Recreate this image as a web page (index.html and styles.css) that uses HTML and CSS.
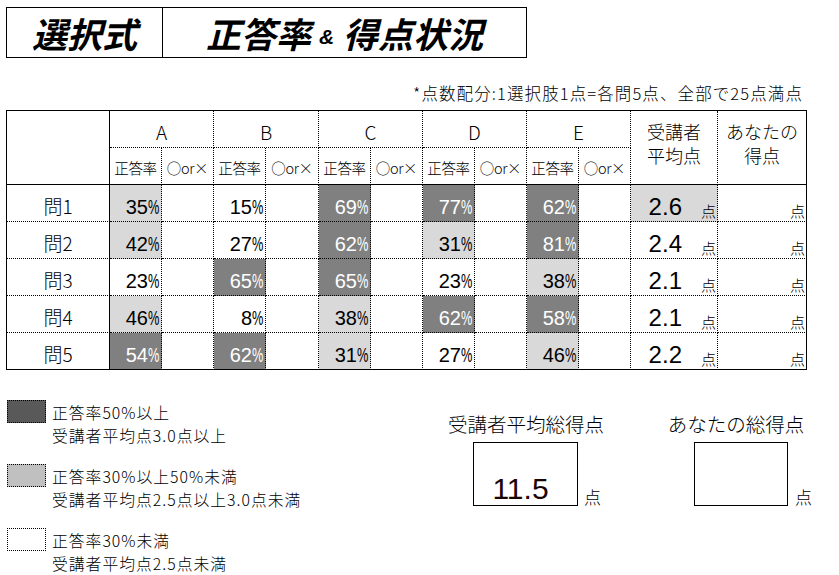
FILE: index.html
```html
<!DOCTYPE html>
<html lang="ja">
<head>
<meta charset="utf-8">
<title>選択式 正答率＆得点状況</title>
<link rel="stylesheet" href="styles.css">
</head>
<body>
<div class="page">
  <div class="title">
    <div class="t1">選択式</div>
    <div class="t2">正答率<span class="amp">&amp;</span>得点状況</div>
  </div>
  <div class="note">*点数配分:1選択肢1点=各問5点、全部で25点満点</div>

  <div class="grid">
    <div class="c corner"></div>
    <div class="c letter">A</div>
    <div class="c letter">B</div>
    <div class="c letter">C</div>
    <div class="c letter">D</div>
    <div class="c letter">E</div>
    <div class="c hdr avgh">受講者<br>平均点</div>
    <div class="c hdr youh last">あなたの<br>得点</div>

    <div class="c sub">正答率</div><div class="c sub">○or×</div>
    <div class="c sub">正答率</div><div class="c sub">○or×</div>
    <div class="c sub">正答率</div><div class="c sub">○or×</div>
    <div class="c sub">正答率</div><div class="c sub">○or×</div>
    <div class="c sub">正答率</div><div class="c sub">○or×</div>

    <div class="c q">問1</div>
    <div class="c pct light">35<span class="pc">%</span></div><div class="c"></div>
    <div class="c pct">15<span class="pc">%</span></div><div class="c"></div>
    <div class="c pct dark">69<span class="pc">%</span></div><div class="c"></div>
    <div class="c pct dark">77<span class="pc">%</span></div><div class="c"></div>
    <div class="c pct dark">62<span class="pc">%</span></div><div class="c"></div>
    <div class="c avg light"><span class="num">2.6</span><span class="sm">点</span></div>
    <div class="c you last"><span class="sm">点</span></div>

    <div class="c q">問2</div>
    <div class="c pct light">42<span class="pc">%</span></div><div class="c"></div>
    <div class="c pct">27<span class="pc">%</span></div><div class="c"></div>
    <div class="c pct dark">62<span class="pc">%</span></div><div class="c"></div>
    <div class="c pct light">31<span class="pc">%</span></div><div class="c"></div>
    <div class="c pct dark">81<span class="pc">%</span></div><div class="c"></div>
    <div class="c avg"><span class="num">2.4</span><span class="sm">点</span></div>
    <div class="c you last"><span class="sm">点</span></div>

    <div class="c q">問3</div>
    <div class="c pct">23<span class="pc">%</span></div><div class="c"></div>
    <div class="c pct dark">65<span class="pc">%</span></div><div class="c"></div>
    <div class="c pct dark">65<span class="pc">%</span></div><div class="c"></div>
    <div class="c pct">23<span class="pc">%</span></div><div class="c"></div>
    <div class="c pct light">38<span class="pc">%</span></div><div class="c"></div>
    <div class="c avg"><span class="num">2.1</span><span class="sm">点</span></div>
    <div class="c you last"><span class="sm">点</span></div>

    <div class="c q">問4</div>
    <div class="c pct light">46<span class="pc">%</span></div><div class="c"></div>
    <div class="c pct">8<span class="pc">%</span></div><div class="c"></div>
    <div class="c pct light">38<span class="pc">%</span></div><div class="c"></div>
    <div class="c pct dark">62<span class="pc">%</span></div><div class="c"></div>
    <div class="c pct dark">58<span class="pc">%</span></div><div class="c"></div>
    <div class="c avg"><span class="num">2.1</span><span class="sm">点</span></div>
    <div class="c you last"><span class="sm">点</span></div>

    <div class="c q bot">問5</div>
    <div class="c pct dark bot">54<span class="pc">%</span></div><div class="c bot"></div>
    <div class="c pct dark bot">62<span class="pc">%</span></div><div class="c bot"></div>
    <div class="c pct light bot">31<span class="pc">%</span></div><div class="c bot"></div>
    <div class="c pct bot">27<span class="pc">%</span></div><div class="c bot"></div>
    <div class="c pct light bot">46<span class="pc">%</span></div><div class="c bot"></div>
    <div class="c avg bot"><span class="num">2.2</span><span class="sm">点</span></div>
    <div class="c you last bot"><span class="sm">点</span></div>
  </div>

  <div class="bottom">
    <div class="legend">
      <div class="li">
        <div class="swatch sw-dark"></div>
        <div class="lt">正答率50%以上<br>受講者平均点3.0点以上</div>
      </div>
      <div class="li">
        <div class="swatch sw-light"></div>
        <div class="lt">正答率30%以上50%未満<br>受講者平均点2.5点以上3.0点未満</div>
      </div>
      <div class="li">
        <div class="swatch"></div>
        <div class="lt">正答率30%未満<br>受講者平均点2.5点未満</div>
      </div>
    </div>

    <div class="score s1">
      <div class="score-title">受講者平均総得点</div>
      <div class="score-row">
        <div class="box box1"><span class="val">11.5</span></div>
        <span class="pt">点</span>
      </div>
    </div>

    <div class="score s2">
      <div class="score-title">あなたの総得点</div>
      <div class="score-row">
        <div class="box box2"></div>
        <span class="pt pt2">点</span>
      </div>
    </div>
  </div>
</div>
</body>
</html>
```

FILE: styles.css
```css
* { box-sizing: border-box; }

body {
  margin: 0;
  background: #fff;
  color: #000;
  font-family: "Noto Sans CJK JP", "Liberation Sans", sans-serif;
}

.page {
  padding: 7px 0 0 6px;
}

/* Title */
.title {
  display: flex;
  width: 521px;
  height: 51px;
  border: 1px solid #000;
}
.t1, .t2 {
  display: flex;
  align-items: center;
  justify-content: center;
  font-size: 35px;
  font-weight: bold;
  font-style: italic;
  line-height: 1;
}
.t1 {
  width: 156px;
  border-right: 1px solid #000;
}
.t2 {
  flex: 1;
}
.amp {
  font-family: "Liberation Sans", sans-serif;
  font-size: 21px;
  margin: 0 9px 0 8px;
  align-self: flex-end;
  padding-bottom: 10px;
}

/* Note */
.note {
  width: 797px;
  margin-top: 25px;
  margin-bottom: 7px;
  height: 20px;
  line-height: 20px;
  font-size: 16.5px;
  font-weight: 300;
  text-align: right;
  letter-spacing: 1.1px;
}

/* Grid table */
.grid {
  display: grid;
  grid-template-columns: 103px 52px 52px 52px 53px 52px 52px 52px 52px 52px 52px 87px 89px;
  grid-template-rows: repeat(7, 37px);
  width: 801px;
  border-top: 1px solid #000;
  border-left: 1px solid #000;
}
.c {
  border-right: 1px dotted #000;
  border-bottom: 1px dotted #000;
}
.c.last { border-right: 1px solid #000; }
.c.bot { border-bottom: 1px solid #000; }

.corner {
  grid-row: span 2;
  border-right: 1px solid #000;
  border-bottom: 1px solid #000;
}
.letter {
  grid-column: span 2;
  display: flex;
  align-items: center;
  justify-content: center;
  padding-top: 4px;
  font-size: 19px;
  font-weight: 300;
}
.hdr {
  grid-row: span 2;
  border-bottom: 1px solid #000;
  text-align: center;
  font-size: 18px;
  line-height: 24px;
  padding-top: 8px;
  font-weight: 300;
}
.sub {
  display: flex;
  align-items: center;
  justify-content: center;
  border-bottom: 1px solid #000;
  font-size: 14.5px;
  padding-top: 3px;
  white-space: nowrap;
  font-weight: 300;
  letter-spacing: -0.3px;
}
.q {
  display: flex;
  align-items: center;
  justify-content: center;
  border-right: 1px solid #000;
  font-size: 19px;
  padding-top: 4px;
  font-weight: 300;
}
.pct {
  display: flex;
  justify-content: flex-end;
  align-items: flex-end;
  padding: 0 2px 4px 0;
  font-family: "Liberation Sans", sans-serif;
  font-size: 20px;
  line-height: 20px;
}
.pc {
  display: inline-block;
  width: 11px;
  transform: scaleX(0.64);
  transform-origin: left center;
}
.dark { background: #808080; color: #fff; }
.light { background: #d9d9d9; }

.avg {
  display: flex;
  justify-content: flex-end;
  align-items: flex-end;
  padding: 0 1px 2px 0;
}
.num {
  font-family: "Liberation Sans", sans-serif;
  font-size: 24px;
  line-height: 24px;
  margin-right: 19px;
}
.sm {
  font-size: 15px;
  line-height: 15px;
  margin-bottom: 1px;
  font-weight: 300;
}
.you {
  display: flex;
  justify-content: flex-end;
  align-items: flex-end;
  padding: 0 1px 2px 0;
}

/* Bottom area */
.bottom {
  display: flex;
  margin-top: 30px;
}
.legend {
  width: 434px;
  display: flex;
  flex-direction: column;
}
.li {
  display: flex;
  height: 64px;
}
.swatch {
  width: 39px;
  height: 23px;
  margin-left: 1px;
  border: 1px dotted #000;
  background: #fff;
}
.sw-dark { background: #595959; }
.sw-light { background: #c0c0c0; }
.lt {
  margin-left: 6px;
  margin-top: 1px;
  font-size: 15.8px;
  line-height: 23px;
  font-weight: 300;
  letter-spacing: 1px;
}

.score {
  display: flex;
  flex-direction: column;
  padding-top: 12px;
}
.s1 { width: 172px; }
.s2 { width: 152px; margin-left: 48px; }
.score-title {
  text-align: center;
  font-size: 19.5px;
  line-height: 24px;
  font-weight: 300;
  white-space: nowrap;
}
.score-row {
  display: flex;
  align-items: flex-end;
  margin-top: 6px;
}
.box {
  height: 64px;
  border: 1px solid #000;
}
.box1 {
  margin-left: 33px;
  width: 105px;
  display: flex;
  justify-content: center;
  align-items: flex-end;
}
.box2 {
  margin-left: 34px;
  width: 114px;
}
.val {
  font-family: "Liberation Sans", sans-serif;
  font-size: 30px;
  line-height: 30px;
  padding-bottom: 1px;
  margin-right: 10px;
  color: #1a0505;
}
.pt {
  font-size: 17px;
  line-height: 17px;
  margin-left: 6px;
  margin-bottom: 1px;
  font-weight: 300;
}
.pt2 { margin-left: 7px; }
```
